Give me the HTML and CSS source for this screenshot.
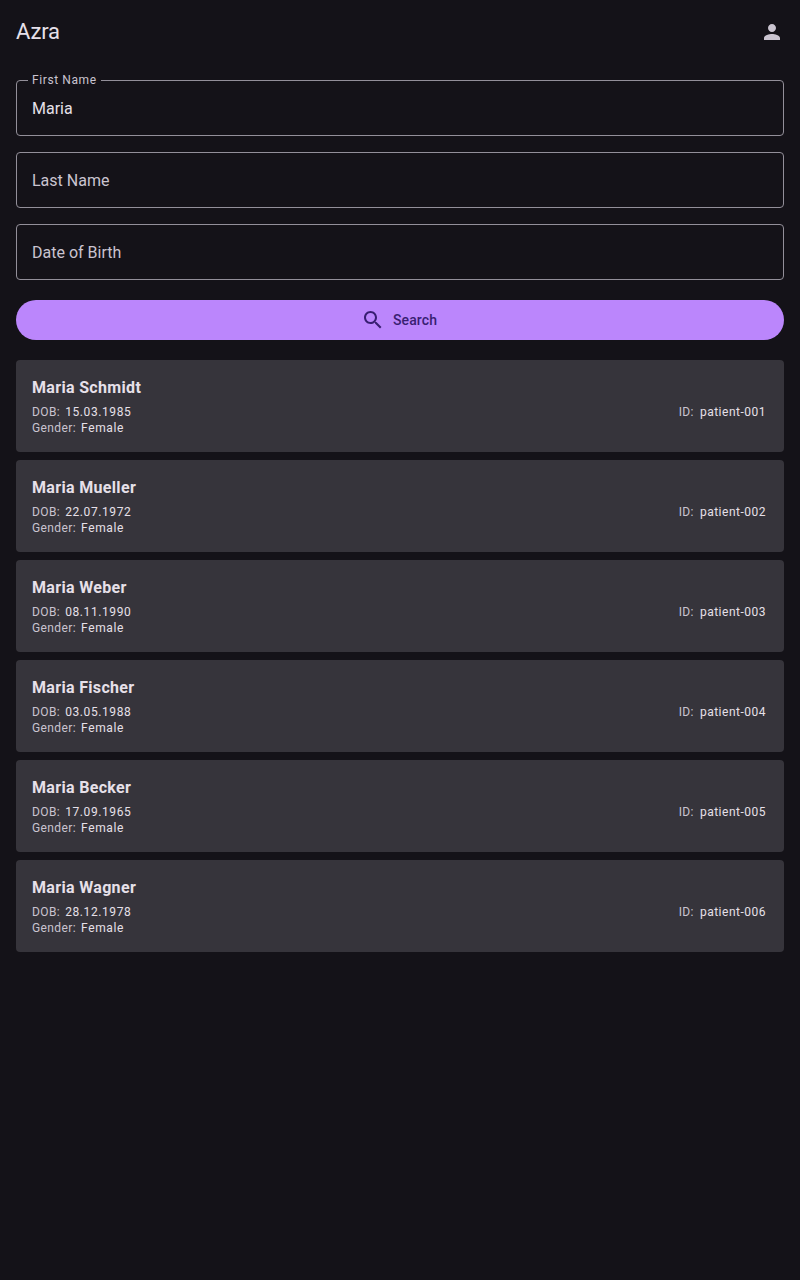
FILE: index.html
```html
<!DOCTYPE html>
<html lang="en">
<head>
  <meta charset="UTF-8">
  <meta name="viewport" content="width=device-width, initial-scale=1.0">
  <title>Azra</title>
  <link rel="stylesheet" href="styles.css">
</head>
<body>
  <header class="top-bar">
    <h1>Azra</h1>
    <button class="icon-btn" aria-label="Profile">
      <svg width="24" height="24" viewBox="0 0 24 24"><path fill="currentColor" d="M12 12c2.21 0 4-1.79 4-4s-1.79-4-4-4-4 1.79-4 4 1.79 4 4 4zm0 2c-2.67 0-8 1.34-8 4v2h16v-2c0-2.66-5.33-4-8-4z"/></svg>
    </button>
  </header>

  <main>
    <form class="search-form">
      <fieldset class="field filled">
        <legend>First Name</legend>
        <input type="text" value="Maria" aria-label="First Name">
      </fieldset>
      <div class="field">
        <input type="text" placeholder="Last Name" aria-label="Last Name">
      </div>
      <div class="field">
        <input type="text" placeholder="Date of Birth" aria-label="Date of Birth">
      </div>
      <button type="button" class="search-btn">
        <svg width="24" height="24" viewBox="0 0 24 24"><path fill="currentColor" d="M15.5 14h-.79l-.28-.27C15.41 12.59 16 11.11 16 9.5 16 5.91 13.09 3 9.5 3S3 5.91 3 9.5 5.91 16 9.5 16c1.61 0 3.09-.59 4.23-1.57l.27.28v.79l5 4.99L20.49 19l-4.99-5zm-6 0C7.01 14 5 11.99 5 9.5S7.01 5 9.5 5 14 7.01 14 9.5 11.99 14 9.5 14z"/></svg>
        <span>Search</span>
      </button>
    </form>

    <div class="patient-list">
      <div class="patient-card">
        <h2>Maria Schmidt</h2>
        <div class="row">
          <p><span class="label">DOB:</span><span class="dob">15.03.1985</span></p>
          <p class="patient-id"><span class="label">ID:</span>patient-001</p>
        </div>
        <p class="gender"><span class="label">Gender:</span>Female</p>
      </div>
      <div class="patient-card">
        <h2>Maria Mueller</h2>
        <div class="row">
          <p><span class="label">DOB:</span><span class="dob">22.07.1972</span></p>
          <p class="patient-id"><span class="label">ID:</span>patient-002</p>
        </div>
        <p class="gender"><span class="label">Gender:</span>Female</p>
      </div>
      <div class="patient-card">
        <h2>Maria Weber</h2>
        <div class="row">
          <p><span class="label">DOB:</span><span class="dob">08.11.1990</span></p>
          <p class="patient-id"><span class="label">ID:</span>patient-003</p>
        </div>
        <p class="gender"><span class="label">Gender:</span>Female</p>
      </div>
      <div class="patient-card">
        <h2>Maria Fischer</h2>
        <div class="row">
          <p><span class="label">DOB:</span><span class="dob">03.05.1988</span></p>
          <p class="patient-id"><span class="label">ID:</span>patient-004</p>
        </div>
        <p class="gender"><span class="label">Gender:</span>Female</p>
      </div>
      <div class="patient-card">
        <h2>Maria Becker</h2>
        <div class="row">
          <p><span class="label">DOB:</span><span class="dob">17.09.1965</span></p>
          <p class="patient-id"><span class="label">ID:</span>patient-005</p>
        </div>
        <p class="gender"><span class="label">Gender:</span>Female</p>
      </div>
      <div class="patient-card">
        <h2>Maria Wagner</h2>
        <div class="row">
          <p><span class="label">DOB:</span><span class="dob">28.12.1978</span></p>
          <p class="patient-id"><span class="label">ID:</span>patient-006</p>
        </div>
        <p class="gender"><span class="label">Gender:</span>Female</p>
      </div>
    </div>
  </main>
</body>
</html>
```
FILE: styles.css
```css
/* Reset */
* {
  box-sizing: border-box;
  margin: 0;
  padding: 0;
}

/* Global styles */
body {
  font-family: Roboto, sans-serif;
  background-color: #141218;
  color: #e6e0e9;
  min-height: 100vh;
}

/* Top bar */
.top-bar {
  display: flex;
  align-items: center;
  justify-content: space-between;
  height: 64px;
  padding: 0 4px 0 16px;
}

.top-bar h1 {
  font-size: 22px;
  line-height: 28px;
  font-weight: 400;
  letter-spacing: -0.1px;
}

.icon-btn {
  display: flex;
  align-items: center;
  justify-content: center;
  width: 48px;
  height: 48px;
  border: none;
  background: none;
  color: #cac4d0;
  cursor: pointer;
}

main {
  padding: 16px;
}

/* Search form */
.search-form {
  display: flex;
  flex-direction: column;
  gap: 16px;
}

.field {
  display: flex;
  height: 56px;
  border: 1px solid #938f99;
  border-radius: 4px;
}

.field input {
  width: 100%;
  height: 54px;
  padding: 0 15px;
  border: none;
  outline: none;
  background: none;
  color: #e6e0e9;
  font-family: inherit;
  font-size: 16px;
}

.field input::placeholder {
  color: #cac4d0;
  opacity: 1;
}

/* The legend cuts the outline, so the box starts half a line higher */
.filled {
  display: block;
  height: 64px;
  margin-top: -8px;
}

.filled legend {
  margin-left: 11px;
  padding: 0 4px;
  color: #cac4d0;
  font-size: 12px;
  line-height: 16px;
  letter-spacing: 0.6px;
}

.filled input {
  display: block;
  height: 40px;
}

.search-btn {
  display: flex;
  align-items: center;
  justify-content: center;
  gap: 8px;
  height: 40px;
  margin-top: 4px;
  padding-right: 2px;
  border: none;
  border-radius: 20px;
  background-color: #bb86fc;
  color: #381e72;
  font-family: inherit;
  font-size: 14px;
  font-weight: 500;
  letter-spacing: 0.1px;
  cursor: pointer;
}

/* Patients */
.patient-list {
  display: flex;
  flex-direction: column;
  gap: 8px;
  margin-top: 20px;
}

.patient-card {
  height: 92px;
  padding: 16px;
  border-radius: 4px;
  background-color: #36343b;
  font-size: 12px;
  line-height: 16px;
  letter-spacing: 0.5px;
}

.patient-card h2 {
  margin-bottom: 4px;
  font-size: 16px;
  line-height: 24px;
  font-weight: 700;
  letter-spacing: 0.33px;
}

.row {
  display: flex;
  justify-content: space-between;
}

.label {
  margin-right: 5px;
  color: #cac4d0;
  letter-spacing: 0.4px;
}

.dob {
  letter-spacing: 0.6px;
}

.gender {
  letter-spacing: 0.6px;
}

.patient-id {
  padding-right: 2px;
}

.patient-id .label {
  margin-right: 6px;
}
```
